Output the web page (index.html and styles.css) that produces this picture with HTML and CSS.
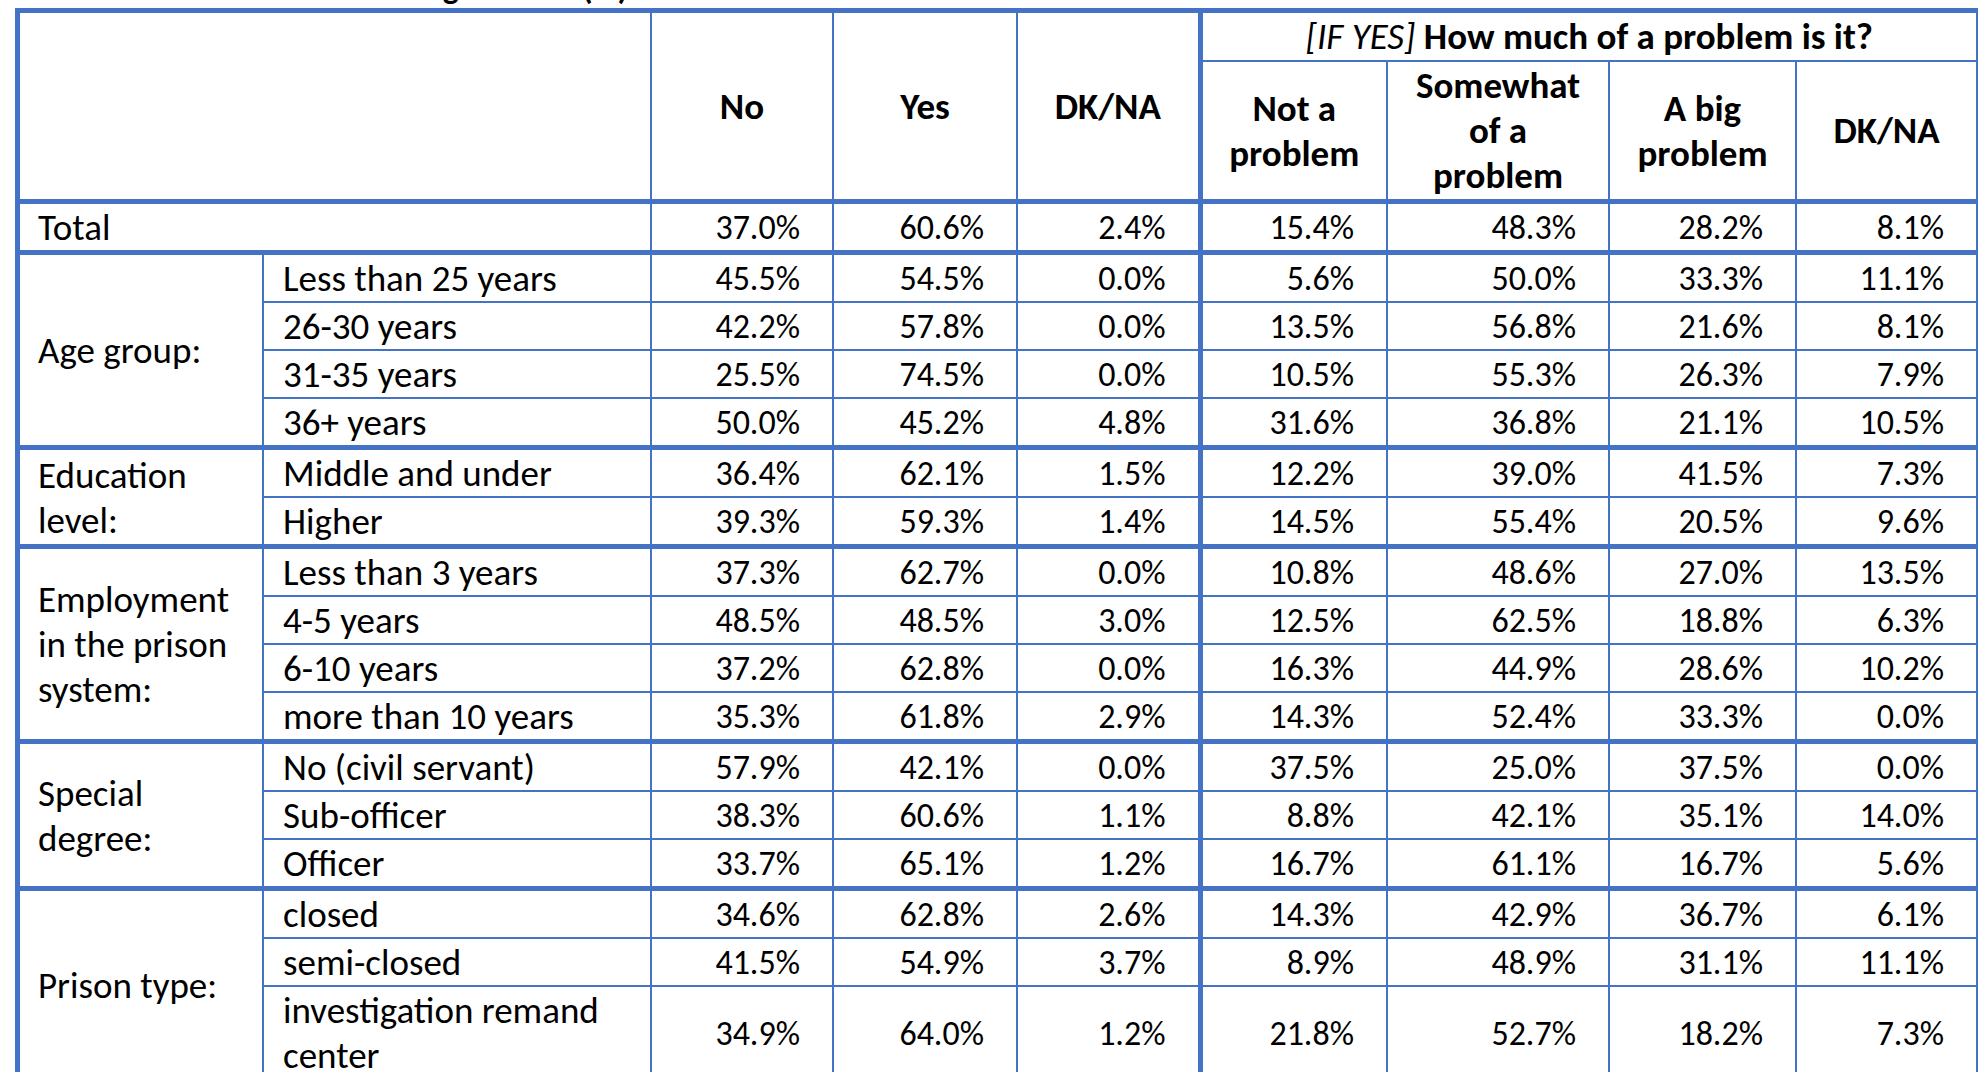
FILE: index.html
```html
<!DOCTYPE html>
<html lang="en">
<head>
<meta charset="utf-8">
<title>Overcrowding – staff survey table</title>
<link rel="stylesheet" href="styles.css">
</head>
<body>
<div class="page">
  <div class="title"><span class="title-text">Table 23. Overcrowding at work (%)</span></div>
  <div class="frame">
    <table class="grid">
      <colgroup>
        <col class="c-cat">
        <col class="c-sub">
        <col class="c-no">
        <col class="c-yes">
        <col class="c-dk">
        <col class="c-not sep">
        <col class="c-some">
        <col class="c-big">
        <col class="c-dk2">
      </colgroup>
      <thead>
        <tr class="h1">
          <th colspan="2" rowspan="2"></th>
          <th rowspan="2">No</th>
          <th rowspan="2">Yes</th>
          <th rowspan="2">DK/NA</th>
          <th colspan="4" class="q"><em>[IF YES]</em> How much of a problem is it?</th>
        </tr>
        <tr class="h2">
          <th>Not a<br>problem</th>
          <th>Somewhat<br>of a<br>problem</th>
          <th>A big<br>problem</th>
          <th>DK/NA</th>
        </tr>
      </thead>
      <tbody>
        <tr><td colspan="2" class="cat">Total</td><td>37.0%</td><td>60.6%</td><td>2.4%</td><td>15.4%</td><td>48.3%</td><td>28.2%</td><td>8.1%</td></tr>
      </tbody>
      <tbody>
        <tr><td rowspan="4" class="cat">Age group:</td><td class="sub">Less than 25 years</td><td>45.5%</td><td>54.5%</td><td>0.0%</td><td>5.6%</td><td>50.0%</td><td>33.3%</td><td>11.1%</td></tr>
        <tr><td class="sub">26-30 years</td><td>42.2%</td><td>57.8%</td><td>0.0%</td><td>13.5%</td><td>56.8%</td><td>21.6%</td><td>8.1%</td></tr>
        <tr><td class="sub">31-35 years</td><td>25.5%</td><td>74.5%</td><td>0.0%</td><td>10.5%</td><td>55.3%</td><td>26.3%</td><td>7.9%</td></tr>
        <tr><td class="sub">36+ years</td><td>50.0%</td><td>45.2%</td><td>4.8%</td><td>31.6%</td><td>36.8%</td><td>21.1%</td><td>10.5%</td></tr>
      </tbody>
      <tbody>
        <tr><td rowspan="2" class="cat">Education<br>level:</td><td class="sub">Middle and under</td><td>36.4%</td><td>62.1%</td><td>1.5%</td><td>12.2%</td><td>39.0%</td><td>41.5%</td><td>7.3%</td></tr>
        <tr><td class="sub">Higher</td><td>39.3%</td><td>59.3%</td><td>1.4%</td><td>14.5%</td><td>55.4%</td><td>20.5%</td><td>9.6%</td></tr>
      </tbody>
      <tbody>
        <tr><td rowspan="4" class="cat">Employment<br>in the prison<br>system:</td><td class="sub">Less than 3 years</td><td>37.3%</td><td>62.7%</td><td>0.0%</td><td>10.8%</td><td>48.6%</td><td>27.0%</td><td>13.5%</td></tr>
        <tr><td class="sub">4-5 years</td><td>48.5%</td><td>48.5%</td><td>3.0%</td><td>12.5%</td><td>62.5%</td><td>18.8%</td><td>6.3%</td></tr>
        <tr><td class="sub">6-10 years</td><td>37.2%</td><td>62.8%</td><td>0.0%</td><td>16.3%</td><td>44.9%</td><td>28.6%</td><td>10.2%</td></tr>
        <tr><td class="sub">more than 10 years</td><td>35.3%</td><td>61.8%</td><td>2.9%</td><td>14.3%</td><td>52.4%</td><td>33.3%</td><td>0.0%</td></tr>
      </tbody>
      <tbody>
        <tr><td rowspan="3" class="cat">Special<br>degree:</td><td class="sub">No (civil servant)</td><td>57.9%</td><td>42.1%</td><td>0.0%</td><td>37.5%</td><td>25.0%</td><td>37.5%</td><td>0.0%</td></tr>
        <tr><td class="sub">Sub-officer</td><td>38.3%</td><td>60.6%</td><td>1.1%</td><td>8.8%</td><td>42.1%</td><td>35.1%</td><td>14.0%</td></tr>
        <tr><td class="sub">Officer</td><td>33.7%</td><td>65.1%</td><td>1.2%</td><td>16.7%</td><td>61.1%</td><td>16.7%</td><td>5.6%</td></tr>
      </tbody>
      <tbody>
        <tr><td rowspan="3" class="cat">Prison type:</td><td class="sub">closed</td><td>34.6%</td><td>62.8%</td><td>2.6%</td><td>14.3%</td><td>42.9%</td><td>36.7%</td><td>6.1%</td></tr>
        <tr><td class="sub">semi-closed</td><td>41.5%</td><td>54.9%</td><td>3.7%</td><td>8.9%</td><td>48.9%</td><td>31.1%</td><td>11.1%</td></tr>
        <tr><td class="sub">investigation remand<br>center</td><td>34.9%</td><td>64.0%</td><td>1.2%</td><td>21.8%</td><td>52.7%</td><td>18.2%</td><td>7.3%</td></tr>
      </tbody>
    </table>
  </div>
</div>
</body>
</html>
```

FILE: styles.css
```css
* {
  box-sizing: border-box;
}

html {
  overflow: hidden;
  background: #ffffff;
}

body {
  margin: 0;
  background: #ffffff;
  color: #000000;
  font-family: Carlito, Lato, "Liberation Sans", sans-serif;
}

.page {
  padding-left: 15px;
}

.title {
  width: 613px;
  height: 8px;
  overflow: hidden;
  text-align: right;
  font-size: 34px;
  font-weight: 700;
}

.title-text {
  display: block;
  line-height: 45px;
  margin-top: -35px;
  white-space: nowrap;
}

.frame {
  width: 1966px;
  border: 5px solid #4472c4;
}

.grid {
  width: 100%;
  border-collapse: collapse;
  border-style: hidden;
  table-layout: fixed;
  font-size: 34px;
  line-height: 45px;
}

.c-cat { width: 243px; }
.c-sub { width: 388px; }
.c-no { width: 182px; }
.c-yes { width: 184px; }
.c-dk { width: 183px; }
.c-not { width: 187px; }
.c-some { width: 222px; }
.c-big { width: 187px; }
.c-dk2 { width: 180px; }

.grid col.sep {
  border-left: 5px solid #4472c4;
}

.grid td,
.grid th {
  border: 2px solid #4472c4;
  padding: 1px 32px 0 0;
  text-align: right;
  vertical-align: middle;
  white-space: nowrap;
  overflow: hidden;
}

.grid th {
  font-size: 37px;
  font-weight: 700;
  text-align: center;
  padding: 1px 0 1px 0;
}

.grid th.q em {
  font-weight: 400;
  font-style: italic;
}

.grid tbody {
  border-top: 5px solid #4472c4;
}

.grid td.cat {
  font-size: 37px;
  text-align: left;
  padding: 1px 0 0 18px;
}

.grid td.sub {
  font-size: 37px;
  text-align: left;
  padding: 1px 0 0 19px;
}
```
